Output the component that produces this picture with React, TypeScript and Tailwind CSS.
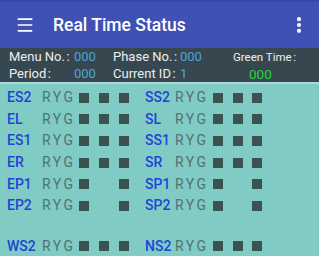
import { EllipsisVertical, Menu } from 'lucide-react';

type Lamp = [boolean, boolean, boolean];

interface SignalRow {
  left: string;
  leftLamps: Lamp;
  right: string;
  rightLamps: Lamp;
}

const rows: SignalRow[] = [
  { left: 'ES2', leftLamps: [true, true, true], right: 'SS2', rightLamps: [true, true, true] },
  { left: 'EL', leftLamps: [true, true, true], right: 'SL', rightLamps: [true, true, true] },
  { left: 'ES1', leftLamps: [true, true, true], right: 'SS1', rightLamps: [true, true, true] },
  { left: 'ER', leftLamps: [true, true, true], right: 'SR', rightLamps: [true, true, true] },
  { left: 'EP1', leftLamps: [true, false, true], right: 'SP1', rightLamps: [true, false, true] },
  { left: 'EP2', leftLamps: [true, false, true], right: 'SP2', rightLamps: [true, false, true] },
];

function Label({ text }: { text: string }) {
  return (
    <span>
      {text}
      <span className="ml-[1.5px]">:</span>
    </span>
  );
}

function Lamps({ lamps, gap }: { lamps: Lamp; gap: string }) {
  return (
    <div className={`flex ${gap}`}>
      {lamps.map((on, i) => (
        <div key={i} className={`w-[10px] h-[10px] ${on ? 'bg-[#3b5350]' : 'bg-transparent'}`} />
      ))}
    </div>
  );
}

function Cell({ label, lamps, side }: { label: string; lamps: Lamp; side: 'left' | 'right' }) {
  const isLeft = side === 'left';
  return (
    <div className="flex items-center">
      <span className={`${isLeft ? 'w-[35px]' : 'w-[30px]'} text-[14px] font-medium text-[#1f44d6]`}>
        {label}
      </span>
      <span className={`${isLeft ? 'w-[37px]' : 'w-[38px]'} text-[14px] tracking-[2.5px] text-[#527370]`}>
        RYG
      </span>
      <Lamps lamps={lamps} gap={isLeft ? 'gap-[10px]' : 'gap-[9.5px]'} />
    </div>
  );
}

function Row({ row }: { row: SignalRow }) {
  return (
    <div className="flex items-center h-[21.6px]">
      <div className="w-[138px]">
        <Cell label={row.left} lamps={row.leftLamps} side="left" />
      </div>
      <Cell label={row.right} lamps={row.rightLamps} side="right" />
    </div>
  );
}

export default function App() {
  return (
    <div
      className="w-[319px] h-[256px] overflow-hidden flex flex-col bg-[#80cbc4]"
      style={{ fontFamily: 'Roboto, "Noto Sans", sans-serif' }}
    >
      <div className="h-[2px] bg-[#3546a3] flex-shrink-0" />
      <div className="h-[46px] bg-[#3f51b5] flex items-center text-white flex-shrink-0">
        <Menu className="w-[20px] h-[20px] ml-[15px]" strokeWidth={2} />
        <span className="ml-[18px] text-[17.5px] font-medium">Real Time Status</span>
        <EllipsisVertical className="ml-auto mr-[10px] w-[20px] h-[20px]" strokeWidth={3} />
      </div>
      <div className="h-[34px] bg-[#37474f] flex-shrink-0 flex text-[13px] text-[#eceff1] leading-[16px] pt-[1px] whitespace-nowrap">
        <div className="w-[74px] shrink-0 pl-[9px] flex flex-col gap-[1px]">
          <Label text="Menu No." />
          <Label text="Period" />
        </div>
        <div className="w-[39px] shrink-0 flex flex-col gap-[1px] text-[#4fa3d8]">
          <span>000</span>
          <span>000</span>
        </div>
        <div className="w-[67px] shrink-0 flex flex-col gap-[1px]">
          <Label text="Phase No." />
          <Label text="Current ID" />
        </div>
        <div className="w-[53px] shrink-0 flex flex-col gap-[1px] text-[#4fa3d8]">
          <span>000</span>
          <span>1</span>
        </div>
        <div className="flex flex-col items-start">
          <span className="text-[11.5px] leading-[16px]">
            Green Time<span className="ml-[1.5px]">:</span>
          </span>
          <span className="ml-[16px] mt-[1px] text-[13.5px] text-[#2ed13c]">000</span>
        </div>
      </div>
      <div className="h-[2px] bg-[#a9d9d4] flex-shrink-0" />
      <div className="flex flex-col pl-[7px] pt-[3px]">
        {rows.map((row) => (
          <Row key={row.left} row={row} />
        ))}
        <div className="h-[19px]" />
        <Row row={{ left: 'WS2', leftLamps: [true, true, true], right: 'NS2', rightLamps: [true, true, true] }} />
      </div>
    </div>
  );
}
